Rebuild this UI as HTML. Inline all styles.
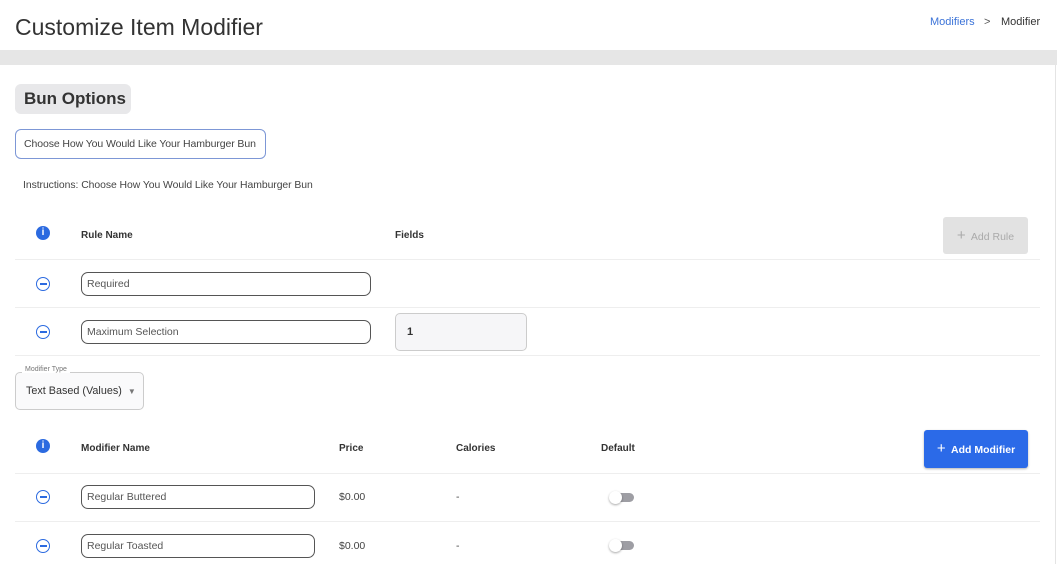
<!DOCTYPE html>
<html><head><style>
body{margin:0;width:1057px;height:564px;overflow:hidden;background:#fff;font-family:"Liberation Sans",Arial,sans-serif;color:#333;position:relative}
.a{position:absolute;white-space:nowrap}
.inp{position:absolute;border:1.5px solid #555;border-radius:7px;box-sizing:border-box;font-size:10.5px;color:#555;padding-left:5px;padding-top:1px;line-height:21px;white-space:nowrap}
.hd{position:absolute;font-size:10px;font-weight:bold;color:#333;white-space:nowrap}
.line{position:absolute;left:15px;width:1025px;height:1px;background:#eee}
.minus{position:absolute;width:12px;height:12px;border:1.6px solid #2b6ae0;border-radius:50%}
.minus:after{content:"";position:absolute;left:2.5px;right:2.5px;top:5.2px;height:1.4px;background:#2b6ae0}
.info{position:absolute;width:14px;height:14px;border-radius:50%;background:#2b6ae0;color:#fff;font-size:10px;font-weight:bold;text-align:center;line-height:14px}
.tg{position:absolute;width:26px;height:10px}
.tg:before{content:"";position:absolute;left:4px;top:1px;width:21px;height:9px;border-radius:5px;background:#9e9ea4}
.tg:after{content:"";position:absolute;left:0;top:-1px;width:13px;height:13px;border-radius:50%;background:#fff;box-shadow:0 1px 2px rgba(0,0,0,.35)}
.sm{position:absolute;font-size:10.5px;color:#444;white-space:nowrap}
</style></head><body>
<div class="a" style="left:15px;top:14px;font-size:23px;color:#333">Customize Item Modifier</div>
<div class="a" style="left:930px;top:16px;font-size:11px;color:#3b73d8">Modifiers</div>
<div class="a" style="left:984px;top:16px;font-size:11px;color:#555">&gt;</div>
<div class="a" style="left:1001px;top:16px;font-size:11px;color:#333">Modifier</div>
<div class="a" style="left:0;top:50px;width:1057px;height:15px;background:#e6e6e6"></div>
<div class="a" style="left:1055px;top:65px;width:1px;height:499px;background:#e4e4e4"></div>
<div class="a" style="left:15px;top:84px;width:116px;height:30px;background:#e8e8ea;border-radius:6px;font-size:17px;font-weight:bold;color:#333;line-height:30px;text-indent:9px">Bun Options</div>
<div class="a" style="left:15px;top:129px;width:251px;height:30px;box-sizing:border-box;border:1px solid #7d97d6;border-radius:6px;font-size:10.5px;color:#444;line-height:29px;padding-left:8px;letter-spacing:-0.1px">Choose How You Would Like Your Hamburger Bun</div>
<div class="sm" style="left:23px;top:180px;font-size:10.4px;letter-spacing:-0.05px">Instructions: Choose How You Would Like Your Hamburger Bun</div>
<div class="info" style="left:36px;top:226px">i</div>
<div class="hd" style="left:81px;top:230px">Rule Name</div>
<div class="hd" style="left:395px;top:230px">Fields</div>
<div class="a" style="left:943px;top:217px;width:85px;height:37px;background:#e2e2e2;border-radius:3px;color:#aaa;font-size:10.5px;line-height:37px;text-align:center"><span style="font-size:15px">+</span>&nbsp; Add Rule</div>
<div class="line" style="top:259px"></div>
<div class="minus" style="left:36px;top:277px"></div>
<div class="inp" style="left:81px;top:272px;width:290px;height:24px">Required</div>
<div class="line" style="top:307px"></div>
<div class="minus" style="left:36px;top:325px"></div>
<div class="inp" style="left:81px;top:320px;width:290px;height:24px">Maximum Selection</div>
<div class="a" style="left:395px;top:313px;width:132px;height:38px;box-sizing:border-box;background:#f6f6f8;border:1px solid #ccc;border-radius:5px;font-size:11px;font-weight:bold;color:#333;line-height:36px;padding-left:11px">1</div>
<div class="line" style="top:355px"></div>
<div class="a" style="left:15px;top:372px;width:129px;height:38px;box-sizing:border-box;border:1px solid #ccc;border-radius:5px;background:#fafafb;font-size:10.8px;color:#333;line-height:36px;padding-left:10px">Text Based (Values) <span style="color:#777;font-size:8px;margin-left:3px">▼</span></div>
<div class="a" style="left:22px;top:366px;background:#fff;padding:0 3px;font-size:7px;color:#777">Modifier Type</div>
<div class="info" style="left:36px;top:439px">i</div>
<div class="hd" style="left:81px;top:443px">Modifier Name</div>
<div class="hd" style="left:339px;top:443px">Price</div>
<div class="hd" style="left:456px;top:443px">Calories</div>
<div class="hd" style="left:601px;top:443px">Default</div>
<div class="a" style="left:924px;top:430px;width:104px;height:38px;background:#2b6ae8;border-radius:3px;color:#fff;font-size:10.5px;font-weight:bold;line-height:38px;text-align:center;box-shadow:0 1px 2px rgba(0,0,0,.3)"><span style="font-size:15px;font-weight:normal">+</span>&nbsp; Add Modifier</div>
<div class="line" style="top:473px"></div>
<div class="minus" style="left:36px;top:490px"></div>
<div class="inp" style="left:81px;top:485px;width:234px;height:24px">Regular Buttered</div>
<div class="sm" style="left:339px;top:491px">$0.00</div>
<div class="sm" style="left:456px;top:491px">-</div>
<div class="tg" style="left:609px;top:492px"></div>
<div class="line" style="top:521px"></div>
<div class="minus" style="left:36px;top:539px"></div>
<div class="inp" style="left:81px;top:534px;width:234px;height:24px">Regular Toasted</div>
<div class="sm" style="left:339px;top:540px">$0.00</div>
<div class="sm" style="left:456px;top:540px">-</div>
<div class="tg" style="left:609px;top:540px"></div>
</body></html>
